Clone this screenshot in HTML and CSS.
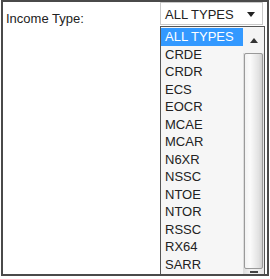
FILE: index.html
```html
<!DOCTYPE html>
<html>
<head>
<meta charset="utf-8">
<link rel="stylesheet" href="styles.css">
</head>
<body>
<div class="panel">
  <div class="label">Income Type:</div>
  <div class="select">
    <span class="select-value">ALL TYPES</span>
    <svg class="caret" width="8" height="5" viewBox="0 0 8 5"><path d="M0 0H8L4 5Z" fill="#222"/></svg>
  </div>
  <div class="dropdown">
    <ul class="options">
      <li class="option selected">ALL TYPES</li>
      <li class="option">CRDE</li>
      <li class="option">CRDR</li>
      <li class="option">ECS</li>
      <li class="option">EOCR</li>
      <li class="option">MCAE</li>
      <li class="option">MCAR</li>
      <li class="option">N6XR</li>
      <li class="option">NSSC</li>
      <li class="option">NTOE</li>
      <li class="option">NTOR</li>
      <li class="option">RSSC</li>
      <li class="option">RX64</li>
      <li class="option">SARR</li>
    </ul>
    <div class="scrollbar">
      <div class="sb-up"><svg width="8" height="5" viewBox="0 0 8 5"><path d="M0 5H8L4 0Z" fill="#333"/></svg></div>
      <div class="sb-thumb"></div>
      <div class="sb-down"><span class="grip"></span></div>
    </div>
  </div>
</div>
</body>
</html>
```
FILE: styles.css
```css
html, body {
  margin: 0;
  padding: 0;
  background: #fff;
}
body {
  width: 270px;
  height: 279px;
  font-family: "Liberation Sans", Arial, sans-serif;
  font-size: 13px;
  color: #222;
}
.panel {
  position: relative;
  box-sizing: border-box;
  margin-left: 1px;
  width: 268px;
  height: 276px;
  border: 2px solid #4a4a4a;
  display: flex;
  justify-content: space-between;
  align-items: flex-start;
  padding-right: 4px;
  overflow: hidden;
}
.label {
  margin-left: 3px;
  margin-top: 9px;
  line-height: 15px;
}
.select {
  box-sizing: border-box;
  width: 103px;
  height: 23px;
  border: 1px solid #c9c9c9;
  background: #fff;
  display: flex;
  align-items: center;
  justify-content: space-between;
  padding: 1px 7px 0 4px;
}
.select-value {
  line-height: 15px;
}
.caret {
  display: block;
}
.dropdown {
  position: absolute;
  left: 157px;
  top: 24px;
  width: 105px;
  height: 262px;
  box-sizing: border-box;
  border: 1px solid #555;
  background: #f6f6f6;
  display: flex;
  padding-top: 1px;
}
.options {
  list-style: none;
  margin: 0;
  padding: 0;
  width: 82px;
}
.option {
  height: 17.5px;
  line-height: 17.5px;
  padding-left: 4px;
  white-space: nowrap;
}
.option.selected {
  background: #3399ff;
  color: #fff;
}
.scrollbar {
  width: 21px;
  display: flex;
  flex-direction: column;
  background: linear-gradient(to right, #dcdcdc, #f2f2f2 40%, #e6e6e6);
}
.sb-up {
  height: 25px;
  display: flex;
  align-items: center;
  justify-content: center;
  background: #f4f4f4;
  padding-bottom: 1px;
  box-sizing: border-box;
}
.sb-up svg {
  display: block;
  margin-top: 1px;
}
.sb-thumb {
  margin: 0 1px;
  height: 216px;
  border: 1px solid #9a9a9a;
  border-radius: 2px;
  background: linear-gradient(to right, #f2f2f2, #fbfbfb 30%, #e2e2e2 80%, #cfcfcf);
}
.sb-down {
  height: 16px;
  display: flex;
  justify-content: center;
  padding-top: 2px;
}
.grip {
  display: block;
  width: 8px;
  height: 2px;
  background: #444;
}
```
